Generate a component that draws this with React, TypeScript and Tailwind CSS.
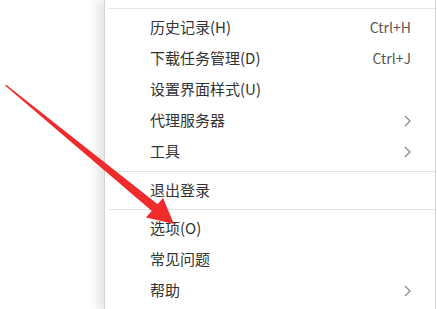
import React from 'react';

type Item = { label: string; shortcut?: string; submenu?: boolean };

const GROUPS: { pad: string; items: Item[] }[] = [
  {
    pad: 'pt-[3px] pb-[4px]',
    items: [
      { label: '历史记录(H)', shortcut: 'Ctrl+H' },
      { label: '下载任务管理(D)', shortcut: 'Ctrl+J' },
      { label: '设置界面样式(U)' },
      { label: '代理服务器', submenu: true },
      { label: '工具', submenu: true },
    ],
  },
  { pad: 'py-[3px]', items: [{ label: '退出登录' }] },
  {
    pad: 'py-[3px]',
    items: [{ label: '选项(O)' }, { label: '常见问题' }, { label: '帮助', submenu: true }],
  },
];

const Chevron = () => (
  <svg width="7" height="12" viewBox="0 0 7 12" className="text-[#8a8a8a]">
    <polyline points="1,1 6,6 1,11" fill="none" stroke="currentColor" strokeWidth="1.3" />
  </svg>
);

const MenuRow: React.FC<{ item: Item }> = ({ item }) => (
  <div className="h-[31px] flex items-center justify-between pl-[45px] pr-[24px]">
    <span className="text-[15px] text-[#333]">{item.label}</span>
    {item.shortcut && <span className="text-[14px] text-[#555]">{item.shortcut}</span>}
    {item.submenu && <Chevron />}
  </div>
);

export default function App() {
  return (
    <div
      className="relative w-[437px] h-[309px] bg-white overflow-hidden"
      style={{ fontFamily: '"Noto Sans CJK SC", "Noto Sans", sans-serif' }}
    >
      {/* menu panel */}
      <div className="ml-[104px] w-[332px] h-full bg-white border-l border-r border-[#d4d4d4] shadow-[-7px_0_9px_rgba(0,0,0,0.10)]">
        <div className="h-[8px]" />
        {GROUPS.map((group, gi) => (
          <div key={gi} className={`border-t border-[#e3e3e3] ml-[4px] ${group.pad}`}>
            <div className="-ml-[4px]">
              {group.items.map((item) => (
                <MenuRow key={item.label} item={item} />
              ))}
            </div>
          </div>
        ))}
      </div>

      {/* red annotation arrow */}
      <svg className="absolute inset-0 pointer-events-none" width="437" height="309" viewBox="0 0 437 309">
        <polygon points="5,85.5 6.5,85 158,204.5 152.5,211.5" fill="#ef2b2b" />
        <polygon points="174,224 146,217.5 163,198" fill="#ef2b2b" />
      </svg>
    </div>
  );
}
